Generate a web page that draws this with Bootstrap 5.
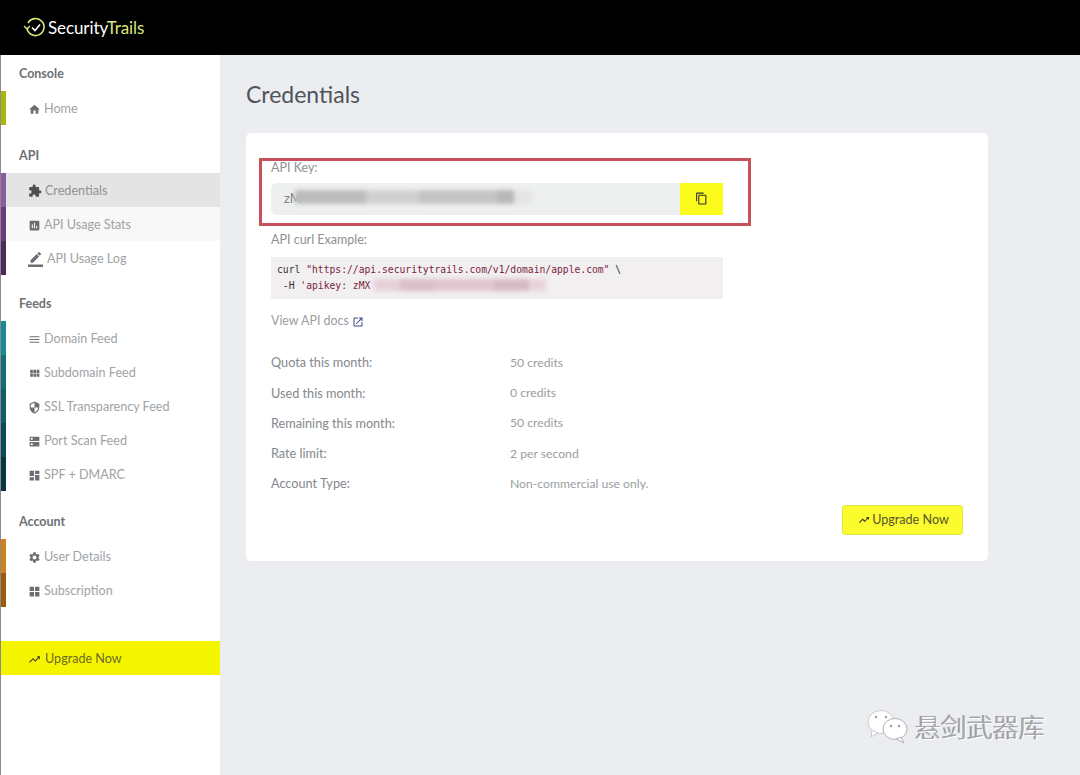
<!DOCTYPE html>
<html lang="en">

<head>
    <meta charset="UTF-8">
    <meta name="viewport" content="width=device-width, initial-scale=1">
    <title>SecurityTrails - Credentials</title>

    <link href="https://cdn.jsdelivr.net/npm/bootstrap@5.3.0/dist/css/bootstrap.min.css" rel="stylesheet">

    <style>
        body {
            background-color: #ebedf0;
            color: #8d9094;
            font-family: Lato, "Noto Sans", sans-serif;
            font-size: 13px;
            height: 775px;
            overflow: hidden;
        }

        .top-bar {
            background-color: #000;
            height: 55px;
            padding: 0 0 0 23px;
            justify-content: flex-start;
        }

        .logo-text {
            color: #fff;
            font-family: Lato, sans-serif;
            font-size: 17px;
            margin-left: 2px;
            letter-spacing: -.1px;
        }

        .logo-text span {
            color: #dbe87a;
        }

        .page-wrap {
            height: 720px;
        }

        .side-menu {
            width: 220px;
            flex-shrink: 0;
            background-color: #fff;
            border-left: 1px solid #8a8a8a;
        }

        .menu-title {
            height: 36px;
            padding: 3px 0 0 18px;
            color: #6d7074;
            font-weight: 700;
            font-size: 12.5px;
        }

        .menu-title.short-title {
            height: 34px;
            padding-top: 1px;
        }

        .menu-group {
            margin-bottom: 12px;
        }

        .menu-link {
            height: 34px;
            color: #a0a3a6;
            font-size: 12.6px;
            border-left: 5px solid #ccc;
            padding: 2px 0 0 22px;
            text-decoration: none;
        }

        .menu-link svg {
            width: 13px;
            height: 13px;
            margin-right: 3px;
            fill: #6b6e72;
            flex-shrink: 0;
        }

        .menu-link.current {
            background-color: #e4e4e5;
            color: #8f9295;
        }

        .menu-link.current svg {
            width: 14px;
            height: 14px;
            fill: #4d5054;
        }

        .menu-link.hovered {
            background-color: #f8f8f8;
        }

        .menu-link.wide-icon svg {
            width: 15px;
            height: 15px;
            margin-right: 4px;
        }

        .menu-upgrade {
            height: 34px;
            margin-top: 34px;
            padding: 2px 0 0 27px;
            background-color: #f5f500;
            color: #6a6a20;
            font-size: 12.6px;
            text-decoration: none;
        }

        .menu-upgrade svg {
            width: 13px;
            height: 13px;
            margin-right: 4px;
            fill: #3c3c20;
        }

        .main-area {
            padding: 26px 92px 0 26px;
            flex-grow: 1;
            position: relative;
        }

        .page-title {
            color: #4f5459;
            font-size: 23px;
            font-weight: 400;
            line-height: 27px;
            margin-bottom: 25px;
        }

        .key-card {
            height: 428px;
            border: 0;
            border-radius: 5px;
            padding: 26px 25px 25px;
            position: relative;
        }

        .field-label {
            color: #8d9094;
            font-size: 12.5px;
            line-height: 18px;
            margin-bottom: 6px;
        }

        .field-label.curl-label {
            margin-bottom: 8px;
        }

        .key-group {
            width: 452px;
            height: 30px;
            margin-bottom: 18px;
            position: relative;
        }

        .key-group .form-control {
            background-color: #eef0f0;
            border: 0;
            color: #7d8084;
            font-size: 13px;
            padding-left: 13px;
            box-shadow: none;
        }

        .copy-btn {
            width: 43px;
            background-color: #fbfb1e;
            border: 0;
            padding: 0;
        }

        .copy-btn svg {
            width: 13px;
            height: 13px;
            fill: #333;
        }

        .curl-box {
            width: 452px;
            height: 42px;
            margin: 0 0 12px;
            padding: 5px 6px;
            background-color: #f1eff0;
            color: #333;
            font-family: "DejaVu Sans Mono", "Liberation Mono", monospace;
            font-size: 9.7px;
            line-height: 15.5px;
            overflow: hidden;
            position: relative;
        }

        .curl-box b {
            color: #7c2440;
            font-weight: 400;
        }

        .docs-link {
            color: #9a9da0;
            text-decoration: none;
            font-size: 12.4px;
        }

        .docs-link svg {
            width: 12px;
            height: 12px;
            fill: #3f4a80;
        }

        .stats-list {
            margin-top: 17px;
        }

        .stat-row {
            height: 30.3px;
        }

        .stat-name {
            width: 239px;
            color: #85888c;
            font-size: 12.7px;
        }

        .stat-value {
            color: #9a9da0;
            font-size: 12.2px;
        }

        .upgrade-btn {
            position: absolute;
            right: 25px;
            bottom: 26px;
            width: 121px;
            height: 30px;
            padding: 0 0 0 2px;
            background-color: #fbfb2e;
            border: 1px solid #e4e44a;
            border-radius: 3px;
            color: #55552c;
            font-size: 12.6px;
        }

        .upgrade-btn svg {
            width: 12px;
            height: 12px;
            fill: #333;
            margin-right: 2px;
        }

        /* blurred-out key, sits on top of the field */
        .key-smear {
            position: absolute;
            left: 25px;
            top: 7px;
            width: 238px;
            height: 14px;
            border-radius: 7px;
            filter: blur(2px);
            background: linear-gradient(90deg, #bcbcbc 0 30%, #d0d0d0 30% 52%, #c4c4c4 52% 85%, #b8b8b8 85% 92%, #e4e4e4 92%);
        }

        .curl-smear {
            position: absolute;
            left: 103px;
            top: 22px;
            width: 172px;
            height: 12px;
            filter: blur(2px);
            background: linear-gradient(90deg, #e6d0d8 0 15%, #d9bfc9 15% 35%, #e0c6cf 35% 70%, #d6bac5 70% 90%, #e8d4db 90%);
        }

        .red-frame {
            position: absolute;
            left: 13px;
            top: 25px;
            width: 492px;
            height: 68px;
            border: 3px solid #c8505a;
            pointer-events: none;
        }

        .watermark {
            position: absolute;
            right: 35px;
            top: 652px;
            color: #a4a7ab;
            font-family: "Noto Sans CJK SC", sans-serif;
            font-size: 26px;
            font-weight: 300;
            line-height: 30px;
            text-shadow: 1px 1px 0 #fff, -1px 0 0 #8f9296;
        }

        .watermark svg {
            width: 44px;
            height: 38px;
            margin-right: 5px;
        }
    </style>
</head>

<body>

    <svg width="0" height="0" class="position-absolute">
        <symbol id="i-home" viewBox="0 0 24 24"><path d="M10 20v-6h4v6h5v-8h3L12 3 2 12h3v8z"/></symbol>
        <symbol id="i-puzzle" viewBox="0 0 24 24"><path d="M20.5 11H19V7c0-1.1-.9-2-2-2h-4V3.5C13 2.12 11.88 1 10.5 1S8 2.12 8 3.5V5H4c-1.1 0-1.99.9-1.99 2v3.8H3.5c1.49 0 2.7 1.21 2.7 2.7s-1.21 2.7-2.7 2.7H2V20c0 1.1.9 2 2 2h3.8v-1.5c0-1.49 1.21-2.7 2.7-2.7 1.49 0 2.7 1.21 2.7 2.7V22H17c1.1 0 2-.9 2-2v-4h1.5c1.38 0 2.5-1.12 2.5-2.5S21.88 11 20.5 11z"/></symbol>
        <symbol id="i-stats" viewBox="0 0 24 24"><path d="M19 3H5c-1.1 0-2 .9-2 2v14c0 1.1.9 2 2 2h14c1.1 0 2-.9 2-2V5c0-1.1-.9-2-2-2zM9 17H7v-7h2v7zm4 0h-2V7h2v10zm4 0h-2v-4h2v4z"/></symbol>
        <symbol id="i-pen" viewBox="0 0 24 24"><path d="M17.75 7L14 3.25l-10 10V17h3.75l10-10zm2.96-2.96c.39-.39.39-1.02 0-1.41L18.37.29c-.39-.39-1.02-.39-1.41 0L15 2.25 18.75 6l1.96-1.96z"/><path d="M0 20h24v4H0z"/></symbol>
        <symbol id="i-menu" viewBox="0 0 24 24"><path d="M3 18h18v-2H3v2zm0-5h18v-2H3v2zm0-7v2h18V6H3z"/></symbol>
        <symbol id="i-module" viewBox="0 0 24 24"><path d="M4 11h5V5H4v6zm0 7h5v-6H4v6zm6 0h5v-6h-5v6zm6 0h5v-6h-5v6zm-6-7h5V5h-5v6zm6-6v6h5V5h-5z"/></symbol>
        <symbol id="i-shield" viewBox="0 0 24 24"><path d="M12 1L3 5v6c0 5.55 3.84 10.74 9 12 5.16-1.26 9-6.45 9-12V5l-9-4zm0 10.99h7c-.53 4.12-3.28 7.79-7 8.94V12H5V6.3l7-3.11v8.8z"/></symbol>
        <symbol id="i-dns" viewBox="0 0 24 24"><path d="M20 13H4c-.55 0-1 .45-1 1v6c0 .55.45 1 1 1h16c.55 0 1-.45 1-1v-6c0-.55-.45-1-1-1zM7 19c-1.1 0-2-.9-2-2s.9-2 2-2 2 .9 2 2-.9 2-2 2zM20 3H4c-.55 0-1 .45-1 1v6c0 .55.45 1 1 1h16c.55 0 1-.45 1-1V4c0-.55-.45-1-1-1zM7 9c-1.1 0-2-.9-2-2s.9-2 2-2 2 .9 2 2-.9 2-2 2z"/></symbol>
        <symbol id="i-dash" viewBox="0 0 24 24"><path d="M3 13h8V3H3v10zm0 8h8v-6H3v6zm10 0h8V11h-8v10zm0-18v6h8V3h-8z"/></symbol>
        <symbol id="i-gear" viewBox="0 0 24 24"><path d="M19.14 12.94c.04-.3.06-.61.06-.94 0-.32-.02-.64-.07-.94l2.03-1.58c.18-.14.23-.41.12-.61l-1.92-3.32c-.12-.22-.37-.29-.59-.22l-2.39.96c-.5-.38-1.03-.7-1.62-.94l-.36-2.54c-.04-.24-.24-.41-.48-.41h-3.84c-.24 0-.43.17-.47.41l-.36 2.54c-.59.24-1.13.57-1.62.94l-2.39-.96c-.22-.08-.47 0-.59.22L2.74 8.87c-.12.21-.08.47.12.61l2.03 1.58c-.05.3-.09.63-.09.94s.02.64.07.94l-2.03 1.58c-.18.14-.23.41-.12.61l1.92 3.32c.12.22.37.29.59.22l2.39-.96c.5.38 1.03.7 1.62.94l.36 2.54c.05.24.24.41.48.41h3.84c.24 0 .44-.17.47-.41l.36-2.54c.59-.24 1.13-.56 1.62-.94l2.39.96c.22.08.47 0 .59-.22l1.92-3.32c.12-.22.07-.47-.12-.61l-2.01-1.58zM12 15.6c-1.98 0-3.6-1.62-3.6-3.6s1.62-3.6 3.6-3.6 3.6 1.62 3.6 3.6-1.62 3.6-3.6 3.6z"/></symbol>
        <symbol id="i-widgets" viewBox="0 0 24 24"><path d="M13 13v8h8v-8h-8zM3 21h8v-8H3v8zM3 3v8h8V3H3zm10 0v8h8V3h-8z"/></symbol>
        <symbol id="i-trend" viewBox="0 0 24 24"><path d="M16 6l2.29 2.29-4.88 4.88-4-4L2 16.59 3.41 18l6-6 4 4 6.3-6.29L22 12V6z"/></symbol>
    </svg>

    <nav class="navbar top-bar">
        <svg width="23" height="23" viewBox="0 0 23 22" fill="none" stroke="#dbe87a" stroke-width="1.6">
            <path d="M5 6.5A8.5 8.5 0 1 1 4 11"/>
            <path d="M1 9.5l3 3 3-3" stroke-width="1.3"/>
            <path d="M9 11l3 3 5-6" stroke="#fff"/>
        </svg>
        <span class="logo-text">Security<span>Trails</span></span>
    </nav>

    <div class="d-flex page-wrap">
        <aside class="side-menu">
            <div class="menu-group">
                <div class="menu-title d-flex align-items-center">Console</div>
                <a href="#" class="menu-link d-flex align-items-center" style="border-left-color:#a9b50f"><svg><use href="#i-home"/></svg>Home</a>
            </div>
            <div class="menu-group">
                <div class="menu-title d-flex align-items-center">API</div>
                <a href="#" class="menu-link current d-flex align-items-center" style="border-left-color:#8c5aa0"><svg><use href="#i-puzzle"/></svg>Credentials</a>
                <a href="#" class="menu-link hovered d-flex align-items-center" style="border-left-color:#6d3a80"><svg><use href="#i-stats"/></svg>API Usage Stats</a>
                <a href="#" class="menu-link wide-icon d-flex align-items-center" style="border-left-color:#4a2a5a"><svg><use href="#i-pen"/></svg>API Usage Log</a>
            </div>
            <div class="menu-group">
                <div class="menu-title short-title d-flex align-items-center">Feeds</div>
                <a href="#" class="menu-link d-flex align-items-center" style="border-left-color:#1a8a96"><svg><use href="#i-menu"/></svg>Domain Feed</a>
                <a href="#" class="menu-link d-flex align-items-center" style="border-left-color:#126f7a"><svg><use href="#i-module"/></svg>Subdomain Feed</a>
                <a href="#" class="menu-link d-flex align-items-center" style="border-left-color:#0f5f69"><svg><use href="#i-shield"/></svg>SSL Transparency Feed</a>
                <a href="#" class="menu-link d-flex align-items-center" style="border-left-color:#0b4a55"><svg><use href="#i-dns"/></svg>Port Scan Feed</a>
                <a href="#" class="menu-link d-flex align-items-center" style="border-left-color:#083640"><svg><use href="#i-dash"/></svg>SPF + DMARC</a>
            </div>
            <div class="menu-group">
                <div class="menu-title d-flex align-items-center">Account</div>
                <a href="#" class="menu-link d-flex align-items-center" style="border-left-color:#d0831c"><svg><use href="#i-gear"/></svg>User Details</a>
                <a href="#" class="menu-link d-flex align-items-center" style="border-left-color:#9a5a10"><svg><use href="#i-widgets"/></svg>Subscription</a>
            </div>
            <a href="#" class="menu-upgrade d-flex align-items-center"><svg><use href="#i-trend"/></svg>Upgrade Now</a>
        </aside>

        <main class="main-area">
            <h1 class="page-title">Credentials</h1>

            <div class="card key-card">
                <div class="field-label">API Key:</div>
                <div class="input-group key-group">
                    <input type="text" class="form-control" value="zM" readonly>
                    <button class="btn copy-btn d-flex align-items-center justify-content-center" type="button">
                        <svg viewBox="0 0 24 24"><path d="M16 1H4c-1.1 0-2 .9-2 2v14h2V3h12V1zm3 4H8c-1.1 0-2 .9-2 2v14c0 1.1.9 2 2 2h11c1.1 0 2-.9 2-2V7c0-1.1-.9-2-2-2zm0 16H8V7h11v14z"/></svg>
                    </button>
                    <div class="key-smear"></div>
                </div>

                <div class="field-label curl-label">API curl Example:</div>
                <div class="curl-box">
                    <div class="d-flex text-nowrap"><span>curl&nbsp;</span><b>"https://api.securitytrails.com/v1/domain/apple.com"</b><span>&nbsp;\</span></div>
                    <div class="d-flex text-nowrap"><span>&nbsp;-H&nbsp;</span><b>'apikey: zMX</b></div>
                    <div class="curl-smear"></div>
                </div>

                <div><a href="#" class="docs-link">View API docs <svg viewBox="0 0 24 24"><path d="M19 19H5V5h7V3H5c-1.11 0-2 .9-2 2v14c0 1.1.89 2 2 2h14c1.1 0 2-.9 2-2v-7h-2v7zM14 3v2h3.59l-9.83 9.83 1.41 1.41L19 6.41V10h2V3h-7z"/></svg></a></div>

                <div class="stats-list">
                    <div class="stat-row d-flex align-items-center"><div class="stat-name">Quota this month:</div><div class="stat-value">50 credits</div></div>
                    <div class="stat-row d-flex align-items-center"><div class="stat-name">Used this month:</div><div class="stat-value">0 credits</div></div>
                    <div class="stat-row d-flex align-items-center"><div class="stat-name">Remaining this month:</div><div class="stat-value">50 credits</div></div>
                    <div class="stat-row d-flex align-items-center"><div class="stat-name">Rate limit:</div><div class="stat-value">2 per second</div></div>
                    <div class="stat-row d-flex align-items-center"><div class="stat-name">Account Type:</div><div class="stat-value">Non-commercial use only.</div></div>
                </div>

                <button class="btn upgrade-btn d-flex align-items-center justify-content-center" type="button"><svg><use href="#i-trend"/></svg>Upgrade Now</button>

                <div class="red-frame"></div>
            </div>

            <div class="watermark d-flex align-items-center">
                <svg viewBox="0 0 44 36">
                    <ellipse cx="15" cy="14" rx="13" ry="11.5" fill="#fff" stroke="#c9cbce"/>
                    <path d="M6 22l-1 7 7-4z" fill="#fff" stroke="#c9cbce"/>
                    <ellipse cx="29" cy="21" rx="12" ry="10.5" fill="#fff" stroke="#aeb1b5"/>
                    <path d="M35 29l3 6-8-4z" fill="#fff" stroke="#aeb1b5"/>
                    <circle cx="10" cy="9" r="1.2" fill="#9a9da0"/><circle cx="20" cy="9" r="1.2" fill="#9a9da0"/>
                    <circle cx="25" cy="18" r="1.2" fill="#9a9da0"/><circle cx="33" cy="18" r="1.2" fill="#9a9da0"/>
                </svg>
                悬剑武器库
            </div>
        </main>
    </div>

    <script src="https://cdn.jsdelivr.net/npm/bootstrap@5.3.0/dist/js/bootstrap.bundle.min.js"></script>
</body>

</html>
